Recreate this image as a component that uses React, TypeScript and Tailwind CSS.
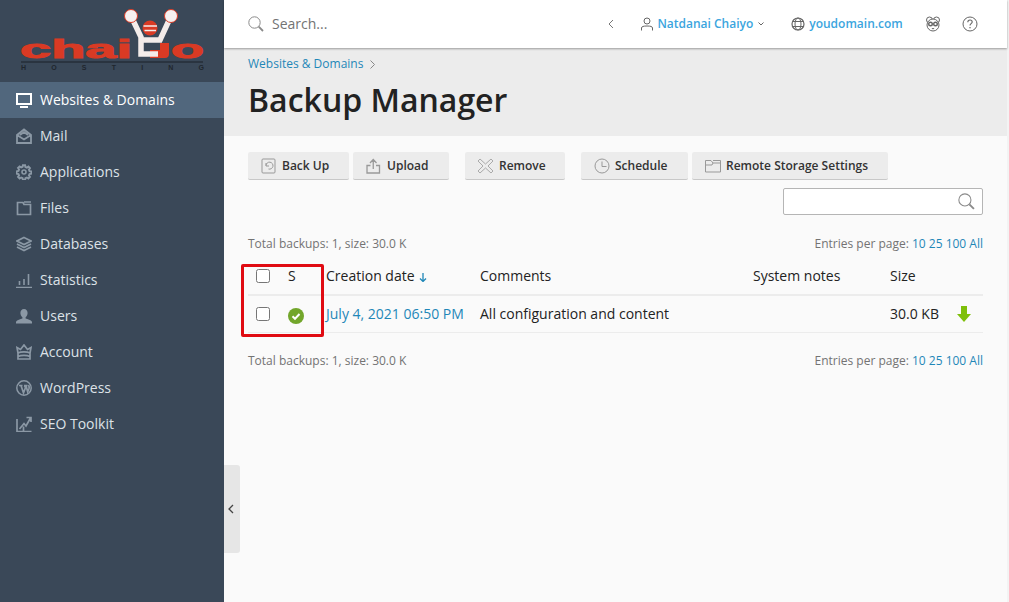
import type { ReactNode } from 'react';

const font = { fontFamily: '"Open Sans", "Liberation Sans", sans-serif' };

function Logo() {
  return (
    <svg width="224" height="82" viewBox="0 0 224 82" className="block">
      <text x="20" y="58" fontFamily="Liberation Sans" fontWeight="700" fontSize="26" fill="#d93a24" stroke="#d93a24" strokeWidth="1" textLength="112" lengthAdjust="spacingAndGlyphs">chai</text>
      <text x="171" y="58" fontFamily="Liberation Sans" fontWeight="700" fontSize="26" fill="#d93a24" stroke="#d93a24" strokeWidth="1" textLength="33" lengthAdjust="spacingAndGlyphs">o</text>
      {/* figure with raised arms */}
      <path d="M150 58 H165 C168 58 169 56 169 54 V43 H160 V50 H150 Z" fill="#d93a24" />
      <path d="M131 16 L141 37 V54 H158 M171 16 L160 40 H141" fill="none" stroke="#f3ecea" strokeWidth="5.500" />
      <circle cx="131" cy="16" r="6.500" fill="#f6f1f0" stroke="#d93a24" strokeWidth="1" />
      <circle cx="171" cy="16" r="6.500" fill="#f6f1f0" stroke="#d93a24" strokeWidth="1" />
      <circle cx="150" cy="28" r="7.500" fill="#d93a24" />
      <path d="M143.500 26 H157 M144.500 30.500 H156" stroke="#f3ecea" strokeWidth="1.400" />
      <rect x="21" y="61" width="182" height="2" fill="#2a3440" />
      <text x="21" y="70" fontFamily="Liberation Sans" fontWeight="700" fontSize="7" fill="#20262e" textLength="183" lengthAdjust="spacing">HOSTING</text>
    </svg>
  );
}

const navIcons: Record<string, ReactNode> = {
  monitor: (
    <>
      <rect x="1" y="2" width="14" height="10" fill="none" stroke="currentColor" strokeWidth="2" />
      <rect x="4" y="14" width="8" height="2" fill="currentColor" />
    </>
  ),
  mail: <path d="M1 7 8 1.500 15 7V15H1ZM1 7l7 4.500L15 7M4 7l4-3 4 3" fill="none" stroke="currentColor" strokeWidth="1.800" />,
  gear: (
    <>
      <path d="M6.800 1h2.400l.4 2 1.600.7 1.700-1.100 1.700 1.700-1.100 1.700.7 1.600 2 .4v2.400l-2 .4-.7 1.600 1.100 1.700-1.700 1.700-1.700-1.100-1.600.7-.4 2H6.800l-.4-2-1.600-.7-1.700 1.100-1.700-1.700 1.100-1.700-.7-1.600-2-.4V7.800l2-.4.7-1.600-1.100-1.700 1.700-1.700 1.700 1.100 1.600-.7z" transform="translate(.8 .3) scale(.9)" fill="none" stroke="currentColor" strokeWidth="2.200" />
      <circle cx="8" cy="8" r="2" fill="none" stroke="currentColor" strokeWidth="1.600" />
    </>
  ),
  folder: <path d="M1.500 2.500H7L8 4.500H14.500V14.500H1.500ZM8 2H15" fill="none" stroke="currentColor" strokeWidth="1.700" />,
  stack: (
    <>
      <path d="M8 1.500 15 5 8 8.500 1 5Z" fill="none" stroke="currentColor" strokeWidth="1.600" />
      <path d="M1 8l7 3.500L15 8M1 11l7 3.500L15 11" fill="none" stroke="currentColor" strokeWidth="1.800" />
    </>
  ),
  chart: <path d="M0 15.500H16M3.500 13V9M8 13V7M12.500 13V2" fill="none" stroke="currentColor" strokeWidth="1.600" />,
  user: <path d="M8 1c2.300 0 3.600 1.700 3.600 4 0 1.800-.9 3.300-2 4.200v1.300c2 .9 5.400 1.300 6.400 3.200V15.500H0V13.700c1-1.900 4.400-2.300 6.400-3.200V9.200c-1.100-.9-2-2.400-2-4.200C4.400 2.700 5.700 1 8 1Z" fill="currentColor" />,
  crown: <path d="M2 9 1 3.500 4.500 5.500 8 1l3.500 4.500L15 3.500 14 9M2 9c3-1.500 9-1.500 12 0M2 9v6H14V9M2 12.500c3-1.500 9-1.500 12 0" fill="none" stroke="currentColor" strokeWidth="1.700" />,
  wp: (
    <>
      <circle cx="8" cy="8" r="7.200" fill="none" stroke="currentColor" strokeWidth="1.500" />
      <path d="M3 5.500H6.500M5 5.500 7.500 13 9.500 7.500 8.500 5.500M8 5.500H11.500M10 5.500 11.700 12 13 8.500C13.500 7 13 6 12.500 5" fill="none" stroke="currentColor" strokeWidth="1.700" />
    </>
  ),
  seo: <path d="M1 3V15.500H15.500M3.500 13 8 7.500 10 10 14.500 2M10.500 1.500H15V6M7.500 15V10.500" fill="none" stroke="currentColor" strokeWidth="1.700" />,
};

const nav = [
  { label: 'Websites & Domains', icon: 'monitor', active: true },
  { label: 'Mail', icon: 'mail' },
  { label: 'Applications', icon: 'gear' },
  { label: 'Files', icon: 'folder' },
  { label: 'Databases', icon: 'stack' },
  { label: 'Statistics', icon: 'chart' },
  { label: 'Users', icon: 'user' },
  { label: 'Account', icon: 'crown' },
  { label: 'WordPress', icon: 'wp' },
  { label: 'SEO Toolkit', icon: 'seo' },
];

function Sidebar() {
  return (
    <aside className="w-[224px] shrink-0 bg-[#3a4858]">
      <Logo />
      <nav>
        {nav.map((item) => (
          <div
            key={item.label}
            className={`flex h-9 items-center gap-2 pl-4 text-sm ${item.active ? 'bg-[#51677d] text-white' : 'text-[#dde2e7]'}`}
          >
            <svg width="16" height="16" viewBox="0 0 16 16" className={item.active ? 'text-white' : 'text-[#8b98a5]'}>
              {navIcons[item.icon]}
            </svg>
            <span>{item.label}</span>
          </div>
        ))}
      </nav>
    </aside>
  );
}

function SearchIcon({ size = 16 }: { size?: number }) {
  return (
    <svg width={size} height={size} viewBox="0 0 16 16" className="text-[#8a8a8a]">
      <circle cx="6.500" cy="6.500" r="5.700" fill="none" stroke="currentColor" strokeWidth="1" />
      <path d="M10.700 10.700 15 15" stroke="currentColor" strokeWidth="1.800" />
    </svg>
  );
}

function Header() {
  return (
    <header className="relative z-10 flex h-[48px] shrink-0 items-center bg-white pl-6 shadow-[0_1px_2px_rgba(0,0,0,0.35)]">
      <SearchIcon />
      <span className="ml-2 text-sm text-[#737373]">Search...</span>
      <svg width="6" height="10" viewBox="0 0 6 10" className="ml-[281px] text-[#777]">
        <path d="M5 1 1 5l4 4" fill="none" stroke="currentColor" />
      </svg>
      <svg width="12" height="14" viewBox="0 0 12 14" className="ml-[27px] text-[#666]">
        <circle cx="6" cy="4" r="3" fill="none" stroke="currentColor" />
        <path d="M.5 13.500V11c0-1.500 2-2 5.500-2s5.500.5 5.500 2v2.500" fill="none" stroke="currentColor" />
      </svg>
      <span className="ml-[4px] text-xs font-semibold text-[#3ba5de]">Natdanai Chaiyo</span>
      <svg width="6" height="4" viewBox="0 0 6 4" className="ml-[5px] text-[#666]">
        <path d="M.5.500 3 3 5.500.500" fill="none" stroke="currentColor" />
      </svg>
      <svg width="14" height="14" viewBox="0 0 14 14" className="ml-[27px] text-[#666]">
        <circle cx="7" cy="7" r="6" fill="none" stroke="currentColor" strokeWidth="1.200" />
        <ellipse cx="7" cy="7" rx="3" ry="6" fill="none" stroke="currentColor" />
        <path d="M2 4.500H12M2 9.500H12" stroke="currentColor" />
      </svg>
      <span className="ml-[4px] text-xs font-semibold text-[#3ba5de]">youdomain.com</span>
      <svg width="16" height="16" viewBox="0 0 16 16" className="ml-[22px] text-[#666]">
        <circle cx="4.500" cy="4" r="3" fill="none" stroke="currentColor" />
        <circle cx="11.500" cy="4" r="3" fill="none" stroke="currentColor" />
        <circle cx="8" cy="9" r="6" fill="#fff" stroke="currentColor" />
        <circle cx="5.500" cy="8" r="1.800" fill="none" stroke="currentColor" strokeWidth="1.400" />
        <circle cx="10.500" cy="8" r="1.800" fill="none" stroke="currentColor" strokeWidth="1.400" />
        <path d="M6.500 12h3L8 13.500Z" fill="currentColor" />
      </svg>
      <svg width="16" height="16" viewBox="0 0 16 16" className="ml-[21px] text-[#666]">
        <circle cx="8" cy="8" r="7" fill="none" stroke="currentColor" />
        <path d="M5.800 6.200C5.800 4.800 6.800 4 8 4s2.200.8 2.200 2c0 1.700-2.200 1.700-2.200 3.500" fill="none" stroke="currentColor" strokeWidth="1.100" />
        <rect x="7.400" y="11" width="1.200" height="1.300" fill="currentColor" />
      </svg>
    </header>
  );
}

const toolIcons: Record<string, ReactNode> = {
  backup: (
    <>
      <rect x="1" y="1" width="13" height="14" rx="1" fill="none" stroke="#999" />
      <path d="M5 7.500A3.500 3.500 0 1 1 7.500 11M5 5v3h3" fill="none" stroke="#999" />
    </>
  ),
  upload: <path d="M4.500 7.500H1V15H13.500V7.500H10M7.250 11V2M4 5 7.250 1.500 10.500 5" fill="none" stroke="#999" strokeWidth="1.300" />,
  remove: <path d="M2 1 7.500 6 13 1 15 3 10 8 15 13 13 15 7.500 10 2 15 0 13 5 8 0 3Z" fill="none" stroke="#aaa" />,
  clock: (
    <>
      <circle cx="8" cy="8" r="7" fill="none" stroke="#999" />
      <path d="M8 3.500V8.500H12.500" fill="none" stroke="#999" />
    </>
  ),
  folder: <path d="M.5 2.500H6L8 5H15.500V14H.5ZM.5 7H7L8 5M8 2.500H15.500V5" fill="none" stroke="#999" />,
};

const tools = [
  { label: 'Back Up', icon: 'backup', width: 'w-[101px]' },
  { label: 'Upload', icon: 'upload', width: 'w-[96px]', gap: 'ml-1' },
  { label: 'Remove', icon: 'remove', width: 'w-[100px]', gap: 'ml-4' },
  { label: 'Schedule', icon: 'clock', width: 'w-[107px]', gap: 'ml-4' },
  { label: 'Remote Storage Settings', icon: 'folder', width: 'w-[196px]', gap: 'ml-1' },
];

function Pager() {
  return (
    <div className="flex h-4 items-center justify-between text-xs text-[#737373]">
      <span>Total backups: 1, size: 30.0 K</span>
      <span>
        Entries per page: <span className="text-[#1f87b8]">10 25 100 All</span>
      </span>
    </div>
  );
}

function Table() {
  return (
    <div className="relative">
      <table className="w-full table-fixed text-sm text-[#222]">
        <colgroup>
          <col className="w-[40px]" />
          <col className="w-[38px]" />
          <col className="w-[154px]" />
          <col className="w-[273px]" />
          <col className="w-[137px]" />
          <col className="w-[66px]" />
          <col />
        </colgroup>
        <thead>
          <tr className="h-[37px] border-b-2 border-[#ececec] text-left">
            <th className="p-0 pl-2 font-normal"><input type="checkbox" className="block size-[14px]" /></th>
            <th className="p-0 font-normal">S</th>
            <th className="p-0 font-normal">
              <span className="inline-flex items-center gap-[4px]">
                Creation date
                <svg width="8" height="9" viewBox="0 0 8 9" className="translate-y-[1px] text-[#1f87b8]">
                  <path d="M4 0V8M1 5.500 4 8.500 7 5.500" fill="none" stroke="currentColor" strokeWidth="1.300" />
                </svg>
              </span>
            </th>
            <th className="p-0 font-normal">Comments</th>
            <th className="p-0 font-normal">System notes</th>
            <th className="p-0 font-normal">Size</th>
            <th className="p-0" />
          </tr>
        </thead>
        <tbody>
          <tr className="h-[37px] border-b border-[#ececec]">
            <td className="p-0 pl-2"><input type="checkbox" className="block size-[14px]" /></td>
            <td className="p-0">
              <svg width="16" height="16" viewBox="0 0 16 16" className="translate-y-[2px]">
                <circle cx="8" cy="8" r="8" fill="#72a62b" />
                <path d="M4.500 8.200 7 10.700 11.500 6" fill="none" stroke="#fff" strokeWidth="2" />
              </svg>
            </td>
            <td className="p-0 text-[#1f87b8] whitespace-nowrap">July 4, 2021 06:50 PM</td>
            <td className="p-0 whitespace-nowrap">All configuration and content</td>
            <td className="p-0" />
            <td className="p-0">30.0 KB</td>
            <td className="p-0">
              <svg width="14" height="16" viewBox="0 0 14 16" className="translate-x-[1px]">
                <path d="M4 0H10V8H14L7 16 0 8H4Z" fill="#7ebf0a" />
              </svg>
            </td>
          </tr>
        </tbody>
      </table>
      {/* annotation drawn on the screenshot */}
      <div className="absolute left-[-7px] top-[6px] h-[73px] w-[83px] rounded-[2px] border-[3px] border-[#e00b12]" />
    </div>
  );
}

export default function App() {
  return (
    <div className="flex h-[602px] w-[1009px] overflow-hidden bg-white" style={font}>
      <Sidebar />
      <div className="flex min-w-0 flex-1 flex-col">
        <Header />
        <div className="h-[88px] shrink-0 bg-[#ececec] pl-6 pt-[8px]">
          <div className="flex h-4 items-center gap-[7px] text-xs text-[#1f87b8]">
            Websites &amp; Domains
            <svg width="5" height="9" viewBox="0 0 5 9" className="text-[#888]">
              <path d="M.5.500 4.500 4.500.500 8.500" fill="none" stroke="currentColor" />
            </svg>
          </div>
          <h1 className="mt-[6px] text-[32px] leading-[44px] font-semibold text-[#222]">Backup Manager</h1>
        </div>
        <div className="relative flex-1 bg-[#fafafa] pl-6 pr-6 pt-4">
          <div className="flex">
            {tools.map((tool) => (
              <button
                key={tool.label}
                className={`flex h-7 items-center gap-[5px] rounded-[2px] border-b border-[#c8c8c8] bg-[#ececec] pl-[13px] text-xs font-semibold text-[#333] ${tool.width} ${tool.gap ?? ''}`}
              >
                <svg width="16" height="16" viewBox="0 0 16 16" className="shrink-0">
                  {toolIcons[tool.icon]}
                </svg>
                {tool.label}
              </button>
            ))}
          </div>
          <div className="mt-2 flex justify-end">
            <div className="flex h-[27px] w-[200px] items-center justify-end rounded-[2px] border border-[#b5b5b5] bg-white pr-[7px]">
              <SearchIcon size={17} />
            </div>
          </div>
          <div className="mt-[21px]">
            <Pager />
          </div>
          <div className="mt-[6px]">
            <Table />
          </div>
          <div className="mt-[20px]">
            <Pager />
          </div>
          {/* sidebar collapse handle */}
          <div className="absolute left-0 top-[329px] flex h-[88px] w-4 items-center justify-start rounded-r-[3px] bg-[#e6e6e6] pl-[4px]">
            <svg width="6" height="10" viewBox="0 0 6 10" className="text-[#444]">
              <path d="M5 1 1 5l4 4" fill="none" stroke="currentColor" strokeWidth="1.300" />
            </svg>
          </div>
        </div>
      </div>
      <div className="w-[2px] shrink-0 bg-[#f3f3f3]" />
    </div>
  );
}
